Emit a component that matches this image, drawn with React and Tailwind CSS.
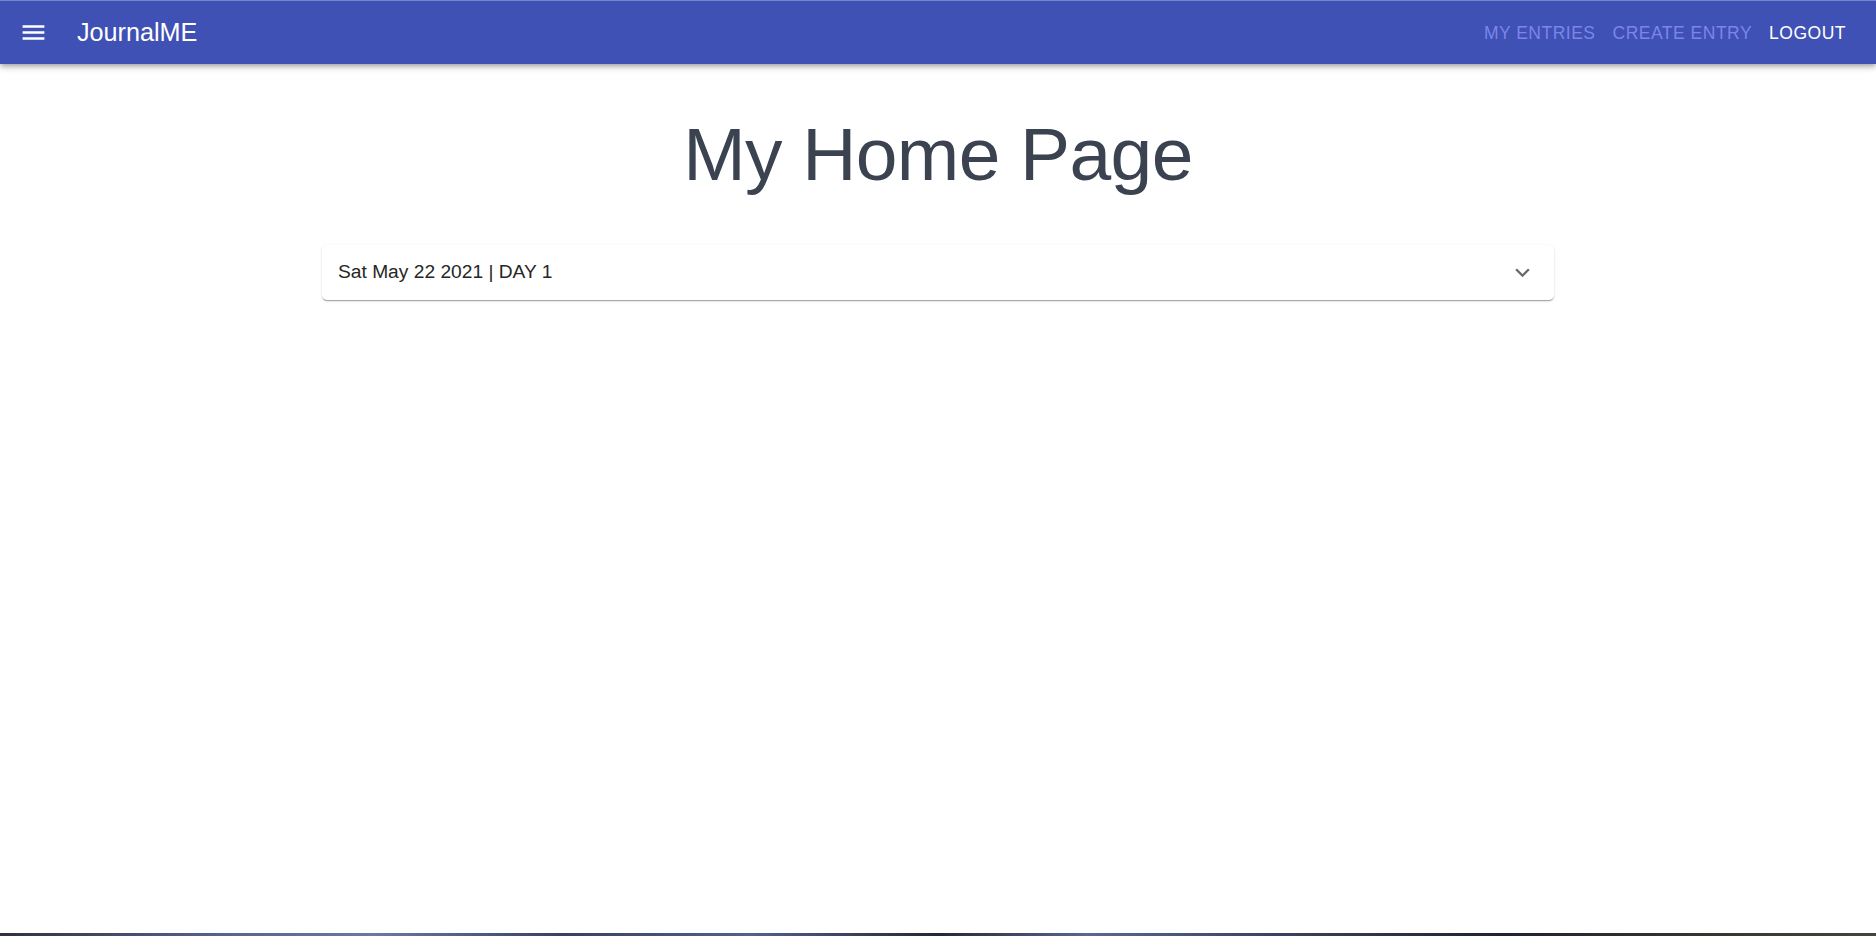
import React from "react";

export default function App() {
  return (
    <div className="min-h-screen flex flex-col bg-white" style={{ fontFamily: '"Liberation Sans", Arial, sans-serif' }}>
      <header className="relative z-10 h-[64px] flex items-center bg-[#3f51b5] border-t border-[#7884c8] shadow-[0_2px_4px_-1px_rgba(0,0,0,0.2),0_4px_5px_0_rgba(0,0,0,0.14),0_1px_10px_0_rgba(0,0,0,0.12)]">
        <div className="pl-[19px] flex items-center">
          <svg width="29" height="29" viewBox="0 0 24 24" fill="#ffffff">
            <path d="M3 18h18v-2H3v2zm0-5h18v-2H3v2zm0-7v2h18V6H3z" />
          </svg>
        </div>
        <div className="ml-[29px] text-[25.2px] leading-none text-white">JournalME</div>
        <nav className="ml-auto pr-[30px] pt-[2px] flex items-center gap-[17px] text-[17.5px] tracking-[0.5px] uppercase leading-none">
          <span className="text-[#7d85e6]">My Entries</span>
          <span className="text-[#7d85e6]">Create Entry</span>
          <span className="text-white">Logout</span>
        </nav>
      </header>
      <main className="flex-1 flex flex-col items-center">
        <h1 className="mt-[45px] text-[75px] leading-[1.2] tracking-[-0.6px] text-[#3b4351]">My Home Page</h1>
        <div className="mt-[46px] w-[1232px] h-[55px] rounded-[5px] bg-white flex items-center pl-[16px] pr-[17px] shadow-[0_2px_1px_-1px_rgba(0,0,0,0.2),0_1px_1px_0_rgba(0,0,0,0.14),0_1px_3px_0_rgba(0,0,0,0.12)]">
          <span className="text-[19.2px] text-[#262626]">Sat May 22 2021 | DAY 1</span>
          <svg className="ml-auto" width="29" height="29" viewBox="0 0 24 24" fill="#6b6b6b">
            <path d="M16.59 8.59L12 13.17 7.41 8.59 6 10l6 6 6-6z" />
          </svg>
        </div>
      </main>
      <div className="h-[3px] bg-[linear-gradient(90deg,#2e3142_0%,#5b638c_12%,#6e77a3_20%,#3a4063_30%,#575f8a_40%,#232738_50%,#5d6690_58%,#3b4160_68%,#1f2332_80%,#33342e_90%,#45443a_100%)]" />
    </div>
  );
}
